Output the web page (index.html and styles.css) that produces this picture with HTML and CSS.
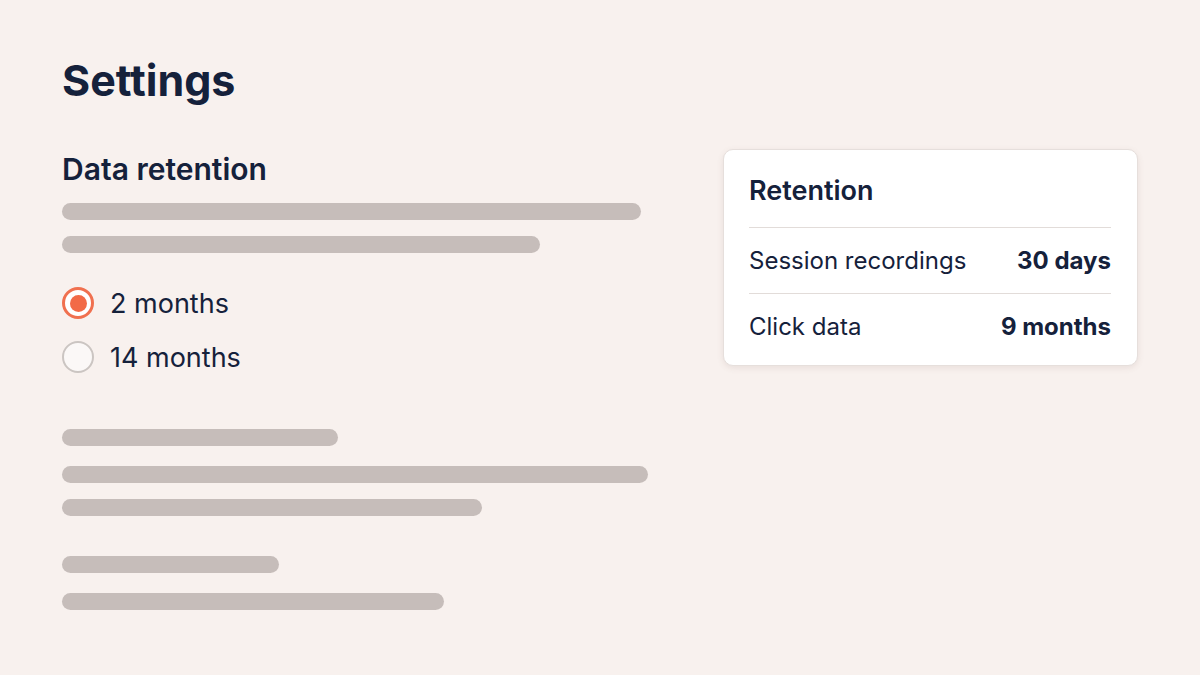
FILE: index.html
```html
<!DOCTYPE html>
<html lang="en">
  <head>
    <meta charset="UTF-8">
    <meta name="viewport" content="width=device-width, initial-scale=1.0">
    <title>Settings</title>
    <link rel="stylesheet" href="styles.css">
  </head>
  <body>
    <div class="page">
      <div class="main">
        <h1 class="title">Settings</h1>
        <h2 class="section-title">Data retention</h2>

        <div class="lines">
          <div class="line" style="width: 579px"></div>
          <div class="line" style="width: 478px"></div>
        </div>

        <div class="options">
          <label class="option">
            <span class="radio checked"></span>
            <span>2 months</span>
          </label>
          <label class="option">
            <span class="radio"></span>
            <span>14 months</span>
          </label>
        </div>

        <div class="lines block-a">
          <div class="line head" style="width: 276px"></div>
          <div class="line" style="width: 586px"></div>
          <div class="line" style="width: 420px"></div>
        </div>

        <div class="lines block-b">
          <div class="line head" style="width: 217px"></div>
          <div class="line" style="width: 382px"></div>
        </div>
      </div>

      <div class="side">
        <div class="card">
          <div class="card-title">Retention</div>
          <div class="row">
            <span>Session recordings</span>
            <span class="value">30 days</span>
          </div>
          <div class="row">
            <span>Click data</span>
            <span class="value">9 months</span>
          </div>
        </div>
      </div>
    </div>
  </body>
</html>
```

FILE: styles.css
```css
body {
    margin: 0;
    background-color: #f8f1ee;
    font-family: Inter, "Noto Sans", sans-serif;
    color: #15213b;
  }

  .page {
    display: grid;
    grid-template-columns: 586px 414px;
    column-gap: 76px;
    padding: 56px 62px;
  }

  .title {
    margin: 0;
    font-size: 43px;
    line-height: 48px;
    font-weight: 700;
  }

  .section-title {
    margin: 47px 0 0;
    font-size: 30px;
    line-height: 36px;
    font-weight: 600;
  }

  .lines {
    display: flex;
    flex-direction: column;
    gap: 16px;
    margin-top: 16px;
  }

  .line {
    height: 17px;
    border-radius: 9px;
    background-color: #c6bdba;
  }

  .block-a {
    margin-top: 54px;
  }

  .block-b {
    margin-top: 40px;
  }

  .line.head {
    margin-bottom: 4px;
  }

  .options {
    display: flex;
    flex-direction: column;
    gap: 18px;
    margin-top: 32px;
  }

  .option {
    display: flex;
    align-items: center;
    gap: 16px;
    height: 36px;
    font-size: 27px;
  }

  .radio {
    box-sizing: border-box;
    width: 32px;
    height: 32px;
    border-radius: 50%;
    border: 2px solid #cbc5c2;
    background-color: #fbf8f7;
    display: flex;
    align-items: center;
    justify-content: center;
  }

  .radio.checked {
    border: 3px solid #f0704f;
    background-color: #fff;
  }

  .radio.checked::after {
    content: "";
    width: 17px;
    height: 17px;
    border-radius: 50%;
    background-color: #f26a47;
  }

  .side {
    padding-top: 93px;
  }

  .card {
    background-color: #fff;
    border: 1px solid #e6dfdc;
    border-radius: 10px;
    box-shadow: 0 2px 6px rgba(120, 90, 80, 0.12);
    padding: 23px 26px 6px 25px;
    margin-left: -1px;
  }

  .card-title {
    font-size: 27px;
    line-height: 36px;
    font-weight: 600;
    margin-bottom: 18px;
  }

  .row {
    display: flex;
    justify-content: space-between;
    border-top: 1px solid #e2dcd9;
    padding: 17px 0 16px;
    font-size: 24px;
    line-height: 32px;
  }

  .value {
    font-weight: 700;
  }
```
